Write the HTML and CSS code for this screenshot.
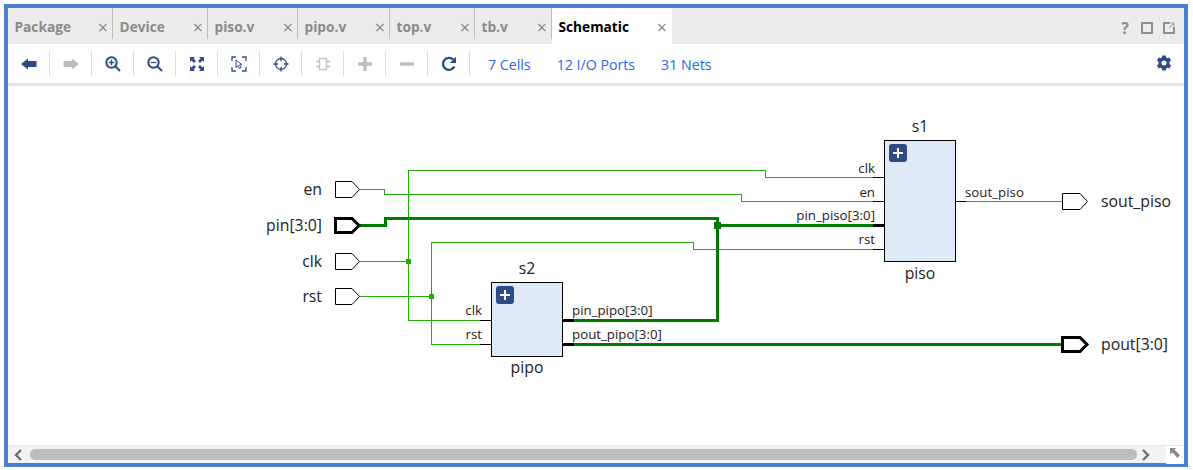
FILE: index.html
```html
<!DOCTYPE html>
<html lang="en">
<head>
  <meta charset="UTF-8" />
  <title>Schematic</title>
  <link rel="stylesheet" href="styles.css">
</head>
<body>

  <div class="frame">

    <div class="tabbar">
      <div class="tabs">
        <div class="tab"><span>Package</span><span class="close">×</span></div>
        <div class="tab"><span>Device</span><span class="close">×</span></div>
        <div class="tab"><span>piso.v</span><span class="close">×</span></div>
        <div class="tab"><span>pipo.v</span><span class="close">×</span></div>
        <div class="tab"><span>top.v</span><span class="close">×</span></div>
        <div class="tab"><span>tb.v</span><span class="close">×</span></div>
        <div class="tab active"><span>Schematic</span><span class="close">×</span></div>
      </div>
      <div class="window-icons">
        <span class="help">?</span>
        <svg width="12" height="12" viewBox="0 0 12 12"><rect x="1" y="1" width="10" height="10" class="win-line"/></svg>
        <svg width="12" height="12" viewBox="0 0 12 12"><path d="M7 1H1V11H11V5" class="win-line"/><path d="M6 6L10 2M8 1H11V4" class="win-thin"/></svg>
      </div>
    </div>

    <div class="toolbar">
      <div class="tool"><svg width="16" height="12" viewBox="0 0 16 12"><path d="M0 6L7 0.5V3H15.5V9H7V11.5Z" class="ico"/></svg></div>
      <div class="tool"><svg width="16" height="12" viewBox="0 0 16 12"><path d="M16 6L9 0.5V3H0.5V9H9V11.5Z" class="ico off"/></svg></div>
      <div class="tool">
        <svg width="16" height="16" viewBox="0 0 16 16"><circle cx="6.5" cy="6.5" r="5.2" class="ico-line"/><path d="M3.7 6.5H9.3M6.5 3.7V9.3" class="ico-thin"/><path d="M10.5 10.5L15 15" class="ico-line"/></svg>
      </div>
      <div class="tool">
        <svg width="16" height="16" viewBox="0 0 16 16"><circle cx="6.5" cy="6.5" r="5.2" class="ico-line"/><path d="M3.7 6.5H9.3" class="ico-thin"/><path d="M10.5 10.5L15 15" class="ico-line"/></svg>
      </div>
      <div class="tool">
        <svg width="16" height="16" viewBox="0 0 16 16"><path d="M1 1H6L4.5 2.6L7 5L5 7L2.6 4.5L1 6ZM15 1V6L13.4 4.5L11 7L9 5L11.5 2.6L10 1ZM1 15V10L2.6 11.5L5 9L7 11L4.5 13.4L6 15ZM15 15H10L11.5 13.4L9 11L11 9L13.4 11.5L15 10Z" class="ico"/></svg>
      </div>
      <div class="tool">
        <svg width="16" height="16" viewBox="0 0 16 16"><path d="M1 5V1H5M11 1H15V5M15 11V15H11M5 15H1V11" class="ico-thin"/><path d="M5 4L5 11.5L7 9.7L8.5 12.5L10 11.7L8.6 9L11 8.7Z" class="cursor"/></svg>
      </div>
      <div class="tool">
        <svg width="16" height="16" viewBox="0 0 16 16"><circle cx="8" cy="8" r="5.5" class="ico-thin"/><path d="M8 0.5V5M8 11V15.5M0.5 8H5M11 8H15.5" class="ico-thin"/></svg>
      </div>
      <div class="tool">
        <svg width="16" height="14" viewBox="0 0 16 14"><rect x="4.5" y="1.5" width="7" height="11" class="off-line"/><path d="M1 4.5H4M1 9.5H4M12 4.5H15M12 9.5H15" class="off-line"/></svg>
      </div>
      <div class="tool"><svg width="16" height="16" viewBox="0 0 16 16"><path d="M1 8H15M8 1V15" class="off-bar"/></svg></div>
      <div class="tool"><svg width="16" height="16" viewBox="0 0 16 16"><path d="M1 8H15" class="off-bar"/></svg></div>
      <div class="tool">
        <svg width="16" height="16" viewBox="0 0 16 16"><path d="M13.4 10.5A6 6 0 1 1 12.2 3.6" class="ico-line wide"/><path d="M15 0.8V7H9Z" class="ico"/></svg>
      </div>
      <div class="stats">
        <a>7 Cells</a>
        <a>12 I/O Ports</a>
        <a>31 Nets</a>
      </div>
      <svg class="gear" width="16" height="16" viewBox="0 0 16 16"><path fill-rule="evenodd" d="M6.3 0.5H9.7L10.2 2.6L11.3 3.2L13.4 2.5L15 5.4L13.5 6.9V9.1L15 10.6L13.4 13.5L11.3 12.8L10.2 13.4L9.7 15.5H6.3L5.8 13.4L4.7 12.8L2.6 13.5L1 10.6L2.5 9.1V6.9L1 5.4L2.6 2.5L4.7 3.2L5.8 2.6ZM8 5.5A2.5 2.5 0 1 0 8 10.5A2.5 2.5 0 1 0 8 5.5Z" class="ico"/></svg>
    </div>

    <svg class="canvas" viewBox="8 86 1176 359">
      <!-- nets -->
      <path class="net" d="M360 189.5H384.5V194.5H741.5V201.5H873"/>
      <path class="net" d="M360 261.5H408.5M480 320.5H408.5V170.5H765.5V177.5H873"/>
      <path class="net" d="M360 296.5H431.5M480 344.5H431.5V242.5H693.5V249.5H873"/>
      <path class="net" d="M966 201.5H1062"/>
      <path class="bus" d="M360 225.5H385.5V218.5H717.5V320.5H574"/>
      <path class="bus" d="M717.5 225.5H873"/>
      <path class="bus" d="M574 344.5H1062"/>
      <rect class="dot" x="406" y="259" width="5" height="5"/>
      <rect class="dot" x="429" y="294" width="5" height="5"/>
      <rect class="bus-dot" x="714" y="222" width="7" height="7"/>

      <!-- pin stubs -->
      <path class="stub" d="M873 177.5H884M873 201.5H884M873 249.5H884M956 201.5H966M480 320.5H491M480 344.5H491"/>
      <path class="stub-bus" d="M873 225.5H884M563 320.5H574M563 344.5H574"/>

      <!-- ports -->
      <path class="port" d="M335.5 181.5H352L359.5 189.5L352 197.5H335.5Z"/>
      <path class="port-bus" d="M335.5 218.5H352L359 225.5L352 232.5H335.5Z"/>
      <path class="port" d="M335.5 253.5H352L359.5 261.5L352 269.5H335.5Z"/>
      <path class="port" d="M335.5 288.5H352L359.5 296.5L352 304.5H335.5Z"/>
      <path class="port" d="M1062.5 193.5H1080L1087.5 201.5L1080 209.5H1062.5Z"/>
      <path class="port-bus" d="M1062.5 337.5H1080L1087 344.5L1080 351.5H1062.5Z"/>

      <text class="port-name end" x="322" y="195">en</text>
      <text class="port-name end" x="322" y="231">pin[3:0]</text>
      <text class="port-name end" x="322" y="267">clk</text>
      <text class="port-name end" x="322" y="302">rst</text>
      <text class="port-name" x="1101" y="207">sout_piso</text>
      <text class="port-name" x="1101" y="350">pout[3:0]</text>

      <!-- s1 -->
      <rect class="cell" x="884.5" y="140.5" width="71" height="121"/>
      <rect class="plus-box" x="889" y="144" width="18" height="18" rx="3"/>
      <path class="plus" d="M893 153H903M898 148V158"/>
      <text class="cell-name mid" x="920" y="132">s1</text>
      <text class="cell-name mid" x="920" y="279">piso</text>
      <text class="pin-name end" x="875" y="173">clk</text>
      <text class="pin-name end" x="875" y="197">en</text>
      <text class="pin-name end" x="875" y="220">pin_piso[3:0]</text>
      <text class="pin-name end" x="875" y="244">rst</text>
      <text class="pin-name" x="965" y="197">sout_piso</text>

      <!-- s2 -->
      <rect class="cell" x="491.5" y="282.5" width="71" height="74"/>
      <rect class="plus-box" x="496" y="286" width="18" height="18" rx="3"/>
      <path class="plus" d="M500 295H510M505 290V300"/>
      <text class="cell-name mid" x="527" y="274">s2</text>
      <text class="cell-name mid" x="527" y="373">pipo</text>
      <text class="pin-name end" x="482" y="315">clk</text>
      <text class="pin-name end" x="482" y="339">rst</text>
      <text class="pin-name" x="572" y="315">pin_pipo[3:0]</text>
      <text class="pin-name" x="572" y="339">pout_pipo[3:0]</text>
    </svg>

    <div class="scrollbar">
      <svg width="10" height="12" viewBox="0 0 10 12"><path d="M8 1L3 6L8 11" class="chevron"/></svg>
      <div class="thumb"></div>
      <svg width="10" height="12" viewBox="0 0 10 12"><path d="M2 1L7 6L2 11" class="chevron"/></svg>
      <div class="corner">
        <svg width="10" height="10" viewBox="0 0 10 10"><path d="M0 0H6L4.5 2L10 7L7.5 10L2.5 4.5L0 6Z" class="corner-arrow"/></svg>
      </div>
    </div>

  </div>

</body>
</html>
```

FILE: styles.css
```css
* {
  box-sizing: border-box;
}
body {
  margin: 0;
  background: #ffffff;
  font-family: "Open Sans", "Noto Sans", sans-serif;
}
.frame {
  width: 1184px;
  height: 463px;
  margin: 4px;
  border: 4px solid #4d7fd1;
  display: flex;
  flex-direction: column;
  background: #ffffff;
}

/* tabs */
.tabbar {
  height: 36px;
  flex: none;
  display: flex;
  justify-content: space-between;
  background: #ececec;
}
.tabs {
  display: grid;
  grid-template-columns: 105px 95px 90px 92px 85px 77px 120px;
  align-items: start;
}
.tab {
  height: 31px;
  padding: 9px 4px 0 6.5px;
  display: flex;
  justify-content: space-between;
  border-right: 1px solid #bdbdbd;
  color: #8a8a8a;
  font-size: 13.7px;
  font-weight: 700;
  line-height: 20px;
}
.tab.active {
  height: 36px;
  background: #ffffff;
  color: #000000;
  border-right: none;
  padding-right: 5px;
}
.close {
  color: #8a8a8a;
  font-size: 18px;
  font-weight: 400;
}
.window-icons {
  display: flex;
  align-items: center;
  gap: 10px;
  padding: 4px 9px 0 0;
}
.help {
  width: 12px;
  color: #8f8f8f;
  font-size: 16px;
  font-weight: 700;
  text-align: center;
}
.win-line {
  fill: none;
  stroke: #8f8f8f;
  stroke-width: 2;
}
.win-thin {
  fill: none;
  stroke: #8f8f8f;
  stroke-width: 1;
}

/* toolbar */
.toolbar {
  height: 42px;
  flex: none;
  display: flex;
  align-items: flex-start;
  padding-top: 7px;
  border-bottom: 3px solid #e4e4e4;
}
.tool {
  width: 42px;
  height: 25px;
  display: flex;
  align-items: center;
  justify-content: center;
  border-right: 1px solid #dcdcdc;
}
.ico {
  fill: #2f4b85;
}
.ico.off {
  fill: #bdbdbd;
}
.ico-line {
  fill: none;
  stroke: #2f4b85;
  stroke-width: 2;
}
.ico-line.wide {
  stroke-width: 2.4;
}
.ico-thin {
  fill: none;
  stroke: #2f4b85;
  stroke-width: 1.3;
}
.cursor {
  fill: #ffffff;
  stroke: #2f4b85;
  stroke-width: 1;
}
.off-line {
  fill: none;
  stroke: #c4c4c4;
  stroke-width: 1.5;
}
.off-bar {
  fill: none;
  stroke: #bdbdbd;
  stroke-width: 3.4;
}
.stats {
  display: flex;
  gap: 26px;
  padding: 1px 0 0 18px;
  color: #2b66f0;
  font-size: 14.2px;
  line-height: 25px;
}
.gear {
  margin: 4px 12.5px 0 auto;
}

/* schematic */
.canvas {
  flex: 1;
  display: block;
  width: 1176px;
  height: 359px;
}
.net,
.bus,
.stub,
.stub-bus,
.port,
.port-bus {
  fill: none;
}
.net {
  stroke: #22ab0a;
  stroke-width: 1;
  shape-rendering: crispEdges;
}
.bus {
  stroke: #007a00;
  stroke-width: 3;
  shape-rendering: crispEdges;
}
.dot {
  fill: #22ab0a;
}
.bus-dot {
  fill: #007a00;
}
.stub {
  stroke: #000000;
  stroke-width: 1;
  shape-rendering: crispEdges;
}
.stub-bus {
  stroke: #000000;
  stroke-width: 3;
  shape-rendering: crispEdges;
}
.port {
  fill: #ffffff;
  stroke: #000000;
  stroke-width: 1;
}
.port-bus {
  fill: #ffffff;
  stroke: #000000;
  stroke-width: 3;
}
.cell {
  fill: #deeaf8;
  stroke: #000000;
  stroke-width: 1;
}
.plus-box {
  fill: #2f4b85;
}
.plus {
  fill: none;
  stroke: #ffffff;
  stroke-width: 2;
}
.port-name,
.cell-name {
  fill: #222222;
  font-size: 15.8px;
}
.pin-name {
  fill: #222222;
  font-size: 13.3px;
}
.end {
  text-anchor: end;
}
.mid {
  text-anchor: middle;
}

/* scrollbar */
.scrollbar {
  height: 18px;
  flex: none;
  display: flex;
  align-items: center;
  gap: 4px;
  padding-left: 5px;
  background: #f2f2f2;
  border-top: 1px solid #e6e6e6;
}
.thumb {
  width: 1107px;
  height: 11px;
  border-radius: 5px;
  background: #bdbdbd;
  margin-left: 3px;
}
.scrollbar svg {
  flex: none;
}
.chevron {
  fill: none;
  stroke: #6e6e6e;
  stroke-width: 2.4;
}
.corner {
  width: 18px;
  height: 18px;
  margin-left: auto;
  padding-bottom: 3px;
  display: flex;
  align-items: center;
  justify-content: center;
  background: #ffffff;
}
.corner-arrow {
  fill: #8a8a8a;
}
```
